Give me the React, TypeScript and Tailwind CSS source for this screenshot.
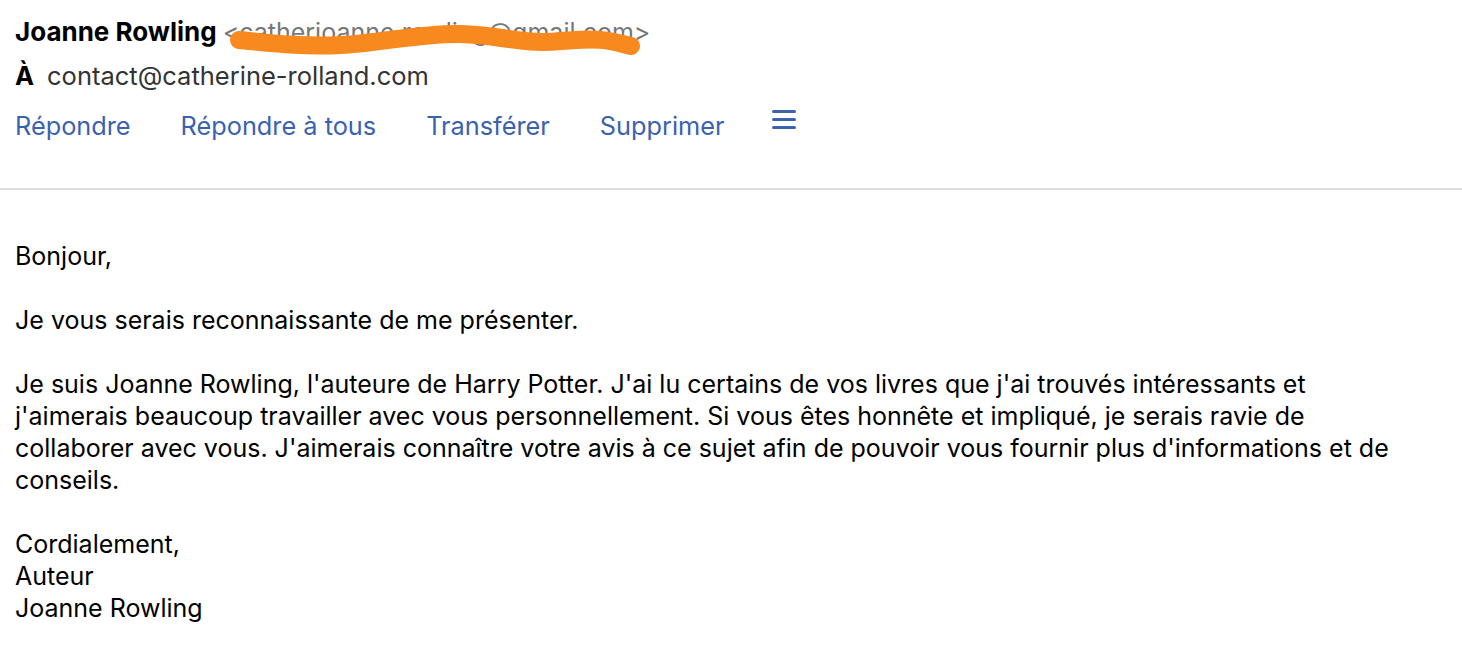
import type { ReactNode } from "react";

const font = { fontFamily: "Inter, 'Noto Sans', sans-serif" };

const actions = ["Répondre", "Répondre à tous", "Transférer", "Supprimer"];

function Scribble() {
  return (
    <svg
      className="pointer-events-none absolute left-0 top-0"
      width="430"
      height="50"
      viewBox="0 0 430 50"
      fill="none"
    >
      <path
        d="M16 26 C 48 29, 78 33, 118 31 S 198 19, 238 20 S 298 31, 338 27 S 388 27, 408 32"
        stroke="#f8891f"
        strokeWidth="18"
        strokeLinecap="round"
        strokeLinejoin="round"
      />
    </svg>
  );
}

function Line({ children }: { children: ReactNode }) {
  return <div className="whitespace-nowrap">{children}</div>;
}

export default function App() {
  return (
    <div className="min-h-[650px] bg-white text-black" style={font}>
      <header className="px-[15px] pt-[14px]">
        <div className="flex items-baseline leading-[36px]">
          <span className="text-[26px] font-bold">Joanne Rowling</span>
          <span className="relative ml-[6px] text-[25px] text-[#777]">
            &lt;catherjoanne.rowling@gmail.com&gt;
            <Scribble />
          </span>
        </div>
        <div className="mt-[8px] flex items-baseline text-[25.5px] leading-[36px]">
          <span className="font-bold">À</span>
          <span className="ml-[13px] text-[#333]">contact@catherine-rolland.com</span>
        </div>
        <nav className="mt-[14px] flex items-center gap-[50px] text-[25.3px] leading-[36px] text-[#3a62b0]">
          {actions.map((label) => (
            <button key={label} type="button" className="cursor-pointer">
              {label}
            </button>
          ))}
          <button type="button" aria-label="Plus" className="-ml-[2px] flex h-[36px] flex-col justify-center gap-[5px] pb-[14px]">
            <span className="block h-[3px] w-[24px] rounded-full bg-[#3a62b0]" />
            <span className="block h-[3px] w-[24px] rounded-full bg-[#3a62b0]" />
            <span className="block h-[3px] w-[24px] rounded-full bg-[#3a62b0]" />
          </button>
        </nav>
      </header>

      <div className="mt-[44px] h-[2px] bg-[#dedede]" />

      <main className="px-[15px] pt-[50px] text-[25px] leading-[32px]">
        <Line>Bonjour,</Line>
        <Line>&nbsp;</Line>
        <Line>Je vous serais reconnaissante de me présenter.</Line>
        <Line>&nbsp;</Line>
        <Line>
          Je suis Joanne Rowling, l'auteure de Harry Potter. J'ai lu certains de vos livres que j'ai trouvés intéressants et
        </Line>
        <Line>
          j'aimerais beaucoup travailler avec vous personnellement. Si vous êtes honnête et impliqué, je serais ravie de
        </Line>
        <Line>
          collaborer avec vous. J'aimerais connaître votre avis à ce sujet afin de pouvoir vous fournir plus d'informations et de
        </Line>
        <Line>conseils.</Line>
        <Line>&nbsp;</Line>
        <Line>Cordialement,</Line>
        <Line>Auteur</Line>
        <Line>Joanne Rowling</Line>
      </main>
    </div>
  );
}
